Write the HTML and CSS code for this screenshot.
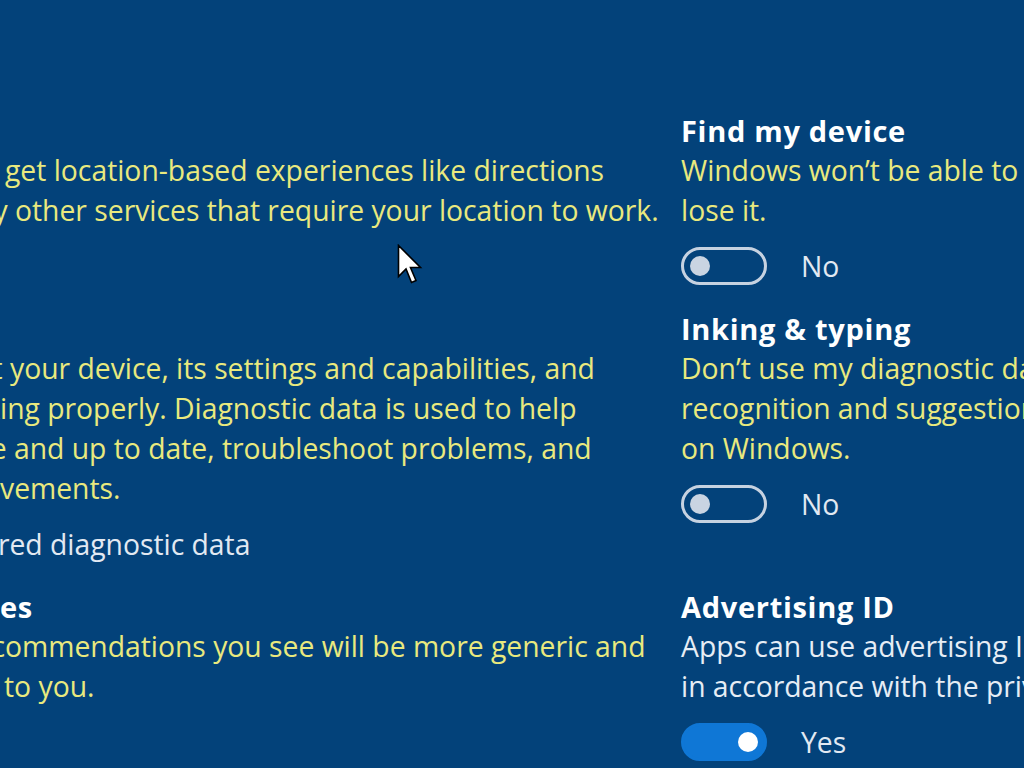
FILE: index.html
```html
<!DOCTYPE html>
<html lang="en">
<head>
<meta charset="utf-8">
<title>Privacy settings</title>
<link rel="stylesheet" href="styles.css">
</head>
<body>
<main class="page">
  <section class="cell">
    <div class="head"></div>
    <div class="line"><span class="pre x5"><span>You won’t be able to&nbsp;</span></span><span>get location-based experiences like directions</span></div>
    <div class="line"><span class="pre x15"><span>and weather, as well as many&nbsp;</span></span><span>other services that require your location to work.</span></div>
  </section>
  <section class="cell">
    <div class="head">Find my device</div>
    <div class="line">Windows won’t be able to help you keep track of your device if you</div>
    <div class="line">lose it.</div>
    <div class="toggle-row"><span class="toggle"><span class="knob"></span></span><span class="state">No</span></div>
  </section>

  <section class="cell">
    <div class="head"></div>
    <div class="line"><span class="pre x10"><span>Send info about&nbsp;</span></span><span>your device, its settings and capabilities, and</span></div>
    <div class="line"><span class="pre x0"><span>whether it is work</span></span><span>ing properly. Diagnostic data is used to help</span></div>
    <div class="line"><span class="pre x14"><span>keep Windows secure&nbsp;</span></span><span>and up to date, troubleshoot problems, and</span></div>
    <div class="line"><span class="pre x0"><span>make product impro</span></span><span>vements.</span></div>
    <div class="toggle-row"><span class="pre x50 state"><span>Required&nbsp;</span></span><span class="state">diagnostic data</span></div>
  </section>
  <section class="cell">
    <div class="head">Inking &amp; typing</div>
    <div class="line">Don’t use my diagnostic data to help improve the language</div>
    <div class="line">recognition and suggestion capabilities of apps and services</div>
    <div class="line">on Windows.</div>
    <div class="toggle-row"><span class="toggle"><span class="knob"></span></span><span class="state">No</span></div>
  </section>

  <section class="cell">
    <div class="head"><span class="pre x0"><span>Tailored experienc</span></span><span>es</span></div>
    <div class="line"><span class="pre x5"><span>The tips, ads, and rec</span></span><span>ommendations you see will be more generic and</span></div>
    <div class="line"><span class="pre x4"><span>may be less relevant&nbsp;</span></span><span>to you.</span></div>
  </section>
  <section class="cell">
    <div class="head">Advertising ID</div>
    <div class="line plain">Apps can use advertising ID to provide more personalized ads</div>
    <div class="line plain">in accordance with the privacy policy of the app.</div>
    <div class="toggle-row"><span class="toggle on"><span class="knob"></span></span><span class="state">Yes</span></div>
  </section>
</main>
<svg class="cursor" width="26" height="42" viewBox="0 0 26 42" aria-hidden="true">
  <path d="M1.5 1.5 L1.5 32.5 L9 25 L14.5 38.5 L19 36.5 L13.5 23.5 L23.5 23.5 Z" fill="#ffffff" stroke="#000000" stroke-width="1.6" stroke-linejoin="miter"/>
</svg>
</body>
</html>
```
FILE: styles.css
```css
html, body {
  margin: 0;
  height: 100%;
  overflow: hidden;
  background: #03427a;
}

body {
  font-family: "Open Sans", "Noto Sans", sans-serif;
  font-size: 28.3px;
  color: #e9e97e;
}

.page {
  display: grid;
  grid-template-columns: 681px 343px;
  row-gap: 24px;
  padding-top: 112px;
}

.cell {
  min-width: 0;
}

.head {
  display: flex;
  height: 38px;
  line-height: 38px;
  font-size: 29px;
  font-weight: 700;
  letter-spacing: 0.7px;
  color: #ffffff;
  white-space: nowrap;
}

.line {
  display: flex;
  height: 40px;
  line-height: 40px;
  white-space: nowrap;
}

.line.plain {
  color: #e6edf5;
}

.pre {
  display: flex;
  justify-content: flex-end;
  flex: 0 0 auto;
  white-space: nowrap;
}

.x0 { width: 0; }
.x4 { width: 4px; }
.x5 { width: 5px; }
.x10 { width: 10px; }
.x14 { width: 14px; }
.x15 { width: 15px; }
.x50 { width: 50px; }

.toggle-row {
  display: flex;
  align-items: center;
  height: 40px;
  margin-top: 16px;
  gap: 34px;
  white-space: nowrap;
}

.toggle-row .pre {
  margin-right: -34px;
}

.state {
  color: #e2e9f2;
}

.toggle {
  box-sizing: border-box;
  display: flex;
  align-items: center;
  flex: 0 0 auto;
  width: 86px;
  height: 38px;
  padding: 0 6px;
  border: 3px solid #c6d2e1;
  border-radius: 19px;
}

.knob {
  width: 20px;
  height: 20px;
  border-radius: 50%;
  background: #c9d4e2;
}

.toggle.on {
  justify-content: flex-end;
  background: #0f77d6;
  border-color: #0f77d6;
}

.toggle.on .knob {
  background: #ffffff;
}

.cursor {
  position: absolute;
  left: 397px;
  top: 244px;
}
```
